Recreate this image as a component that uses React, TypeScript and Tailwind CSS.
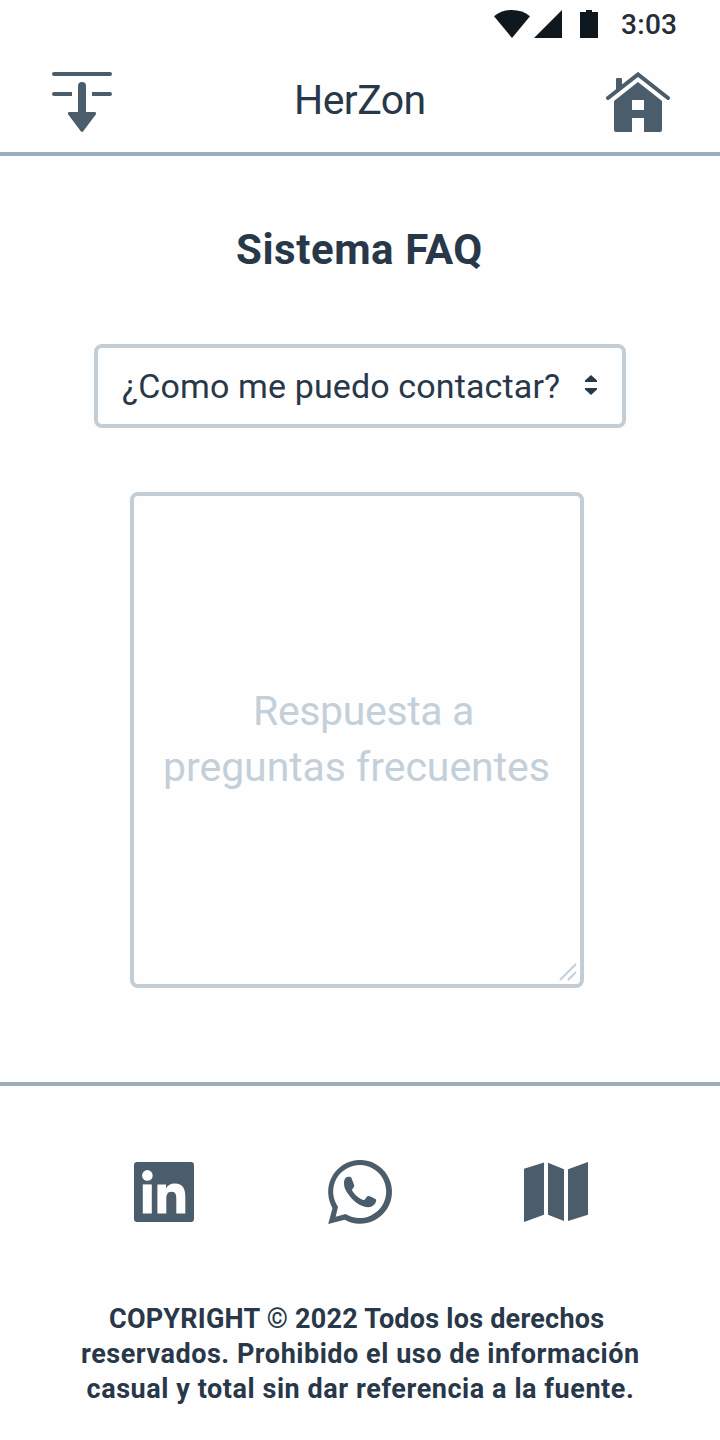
import React from "react";

function StatusBar() {
  return (
    <div className="flex h-12 items-center pl-[494px] text-[#10181f]">
      <svg className="h-12 w-[104px] shrink-0" viewBox="494 0 104 48" fill="currentColor" aria-hidden="true">
        <path d="M494 16.2C499 12.2 505 10 512 10s13 2.2 18 6.2L512 38Z" />
        <path d="M534 38 562 10V38Z" />
        <path d="M580 12h6v-2h6v2h6v26h-18Z" />
      </svg>
      <span className="mt-0.5 ml-[23px] text-[28px] font-medium tracking-[0.3px] whitespace-nowrap text-[#252d37]">3:03</span>
    </div>
  );
}

function DownloadIcon() {
  return (
    <svg className="h-15 w-15" viewBox="0 0 60 60" fill="currentColor" aria-hidden="true">
      <rect width="60" height="4" rx="2" />
      <path d="M2 20h18v4H2a2 2 0 0 1 0-4ZM40 20h18a2 2 0 0 1 0 4H40Z" />
      <path d="M26 14a4 4 0 0 1 8 0v26h8.5c1.6 0 2 1.5 1.1 2.7L31.2 59.2c-.7.9-1.7.9-2.4 0L16.4 42.7c-.9-1.2-.5-2.7 1.1-2.7H26Z" />
    </svg>
  );
}

function HomeIcon() {
  return (
    <svg className="h-15 w-16" viewBox="0 0 64 60" fill="currentColor" aria-hidden="true">
      <path d="M10 7a1 1 0 0 1 1-1h4a1 1 0 0 1 1 1v7l-6 5Z" />
      <path d="M2 26 32 2.4 62 26" fill="none" stroke="currentColor" strokeWidth="4" strokeLinecap="round" />
      <path fillRule="evenodd" d="M32 10 56 29v29a2 2 0 0 1-2 2H38V46H26v14H10a2 2 0 0 1-2-2V29ZM26 28v10h12V28Z" />
    </svg>
  );
}

function LinkedInIcon() {
  return (
    <svg className="h-15 w-15" viewBox="0 0 60 60" aria-hidden="true">
      <rect width="60" height="60" rx="3.2" fill="currentColor" />
      <g fill="#fefefe">
        <circle cx="13.4" cy="13.4" r="5.3" />
        <path d="M8.8 22.4h9V51.5h-9Z" />
        <path d="M23.4 22.4H32v4c1.6-2.9 4.8-4.8 8.8-4.8 8.4 0 10.5 5.4 10.5 13.4v16.5h-9V37c0-3.8-.4-7.3-4.8-7.3s-5.2 3.4-5.2 7.3v14.5h-8.9Z" />
      </g>
    </svg>
  );
}

function WhatsAppIcon() {
  return (
    <svg className="h-16 w-16" viewBox="0 0 64 64" fill="currentColor" aria-hidden="true">
      <path fillRule="evenodd" d="M.2 64 4.500 47.900A31.900 31.900 0 1 1 16.700 59.800ZM7.700 56.700 17.600 54A26.500 26.500 0 1 0 10 46.800Z" />
      <path d="M17.800 17.800c1-.9 3.900-1.300 5-.6.700.5 1.300 2.300 2 4.400.7 1.900 1.500 3.200 1.400 4.300-.1 1.300-2.300 3.100-2.200 4.100.1.700 2.500 4 4.700 5.900 2.700 2.400 6.200 4.100 7.300 4.100 1 0 2.500-3.600 4.100-4.100 1.100-.3 6.700 2.400 7.800 3.300.7.600.1 3.200-.9 4.600-1.200 1.800-4.400 3.500-6.700 3.500-3.300 0-8-1.700-11.900-4.500-3.500-2.600-7.500-7.400-9.700-10.900-1.700-2.700-2.800-5.700-2.700-8.400 0-2.500.5-4.500 1.800-5.700Z" />
    </svg>
  );
}

function MapIcon() {
  return (
    <svg className="h-15 w-16" viewBox="0 0 64 60" fill="currentColor" aria-hidden="true">
      <path d="M0 6.700 20 .4V52.800L0 60ZM24 .8 40 7.200V59L24 52.800ZM44 7.200 64 0V52.800L44 59Z" />
    </svg>
  );
}

export default function App() {
  return (
    <main className="flex h-[1440px] w-[720px] flex-col overflow-hidden bg-[#fefefe] font-['Roboto',sans-serif] text-[#283848]">
      <StatusBar />
      <header className="flex h-[108px] items-center border-b-4 border-[#9eaebb] pr-[50px] pl-[52px] text-[#4b5d6a]">
        <button className="mt-1" aria-label="Descargar">
          <DownloadIcon />
        </button>
        <h1 className="ml-[182px] text-[41px] leading-[56px] tracking-[-0.58px] whitespace-nowrap text-[#283848]">HerZon</h1>
        <button className="mt-1 ml-auto" aria-label="Inicio">
          <HomeIcon />
        </button>
      </header>

      <h2 className="mt-[66px] ml-[236px] h-14 text-[42px] leading-[56px] font-bold tracking-[0.55px] whitespace-nowrap">Sistema FAQ</h2>

      <button className="mt-[66px] ml-[94px] flex h-[84px] w-[532px] items-center rounded-lg border-4 border-[#c3cdd5] pl-6">
        <span className="text-[34px] tracking-[0.13px] whitespace-nowrap">¿Como me puedo contactar?</span>
        <svg className="mr-[25px] mb-0.5 ml-auto h-5 w-3 shrink-0" viewBox="0 0 12 20" fill="currentColor" aria-hidden="true">
          <path d="M6 0 12 5.500V7H0V5.500ZM0 13H12v1.500L6 20 0 14.500Z" />
        </svg>
      </button>

      <section className="relative mt-16 ml-[130px] flex h-[496px] w-[454px] flex-col justify-center rounded-lg border-4 border-[#c3cdd5] pb-0.5 text-[41px] leading-[56px] whitespace-nowrap text-[#c3d0da]">
        <p className="pl-[119px] tracking-[-0.35px]">Respuesta a</p>
        <p className="pl-[29px] tracking-[-0.05px]">preguntas frecuentes</p>
        <svg className="absolute right-1 bottom-1 h-4 w-4 overflow-visible" viewBox="0 0 16 16" fill="none" stroke="currentColor" strokeWidth="2" aria-hidden="true">
          <path d="M0 16 16 0M8 16 16 8" />
        </svg>
      </section>

      <footer className="mt-[94px] border-t-4 border-[#9eaebb] pt-[74px]">
        <nav className="flex h-16 items-center pl-[134px] text-[#4b5d6a]">
          <a aria-label="LinkedIn">
            <LinkedInIcon />
          </a>
          <a className="ml-[134px]" aria-label="WhatsApp">
            <WhatsAppIcon />
          </a>
          <a className="ml-[132px]" aria-label="Mapa">
            <MapIcon />
          </a>
        </nav>
        <div className="mt-[78px] text-[27px] leading-[35px] font-bold whitespace-nowrap">
          <p className="pl-[109px] tracking-[0.23px]">COPYRIGHT © 2022 Todos los derechos</p>
          <p className="pl-[81px] tracking-[0.53px]">reservados. Prohibido el uso de información</p>
          <p className="pl-[86.5px] tracking-[0.56px]">casual y total sin dar referencia a la fuente.</p>
        </div>
      </footer>
    </main>
  );
}
